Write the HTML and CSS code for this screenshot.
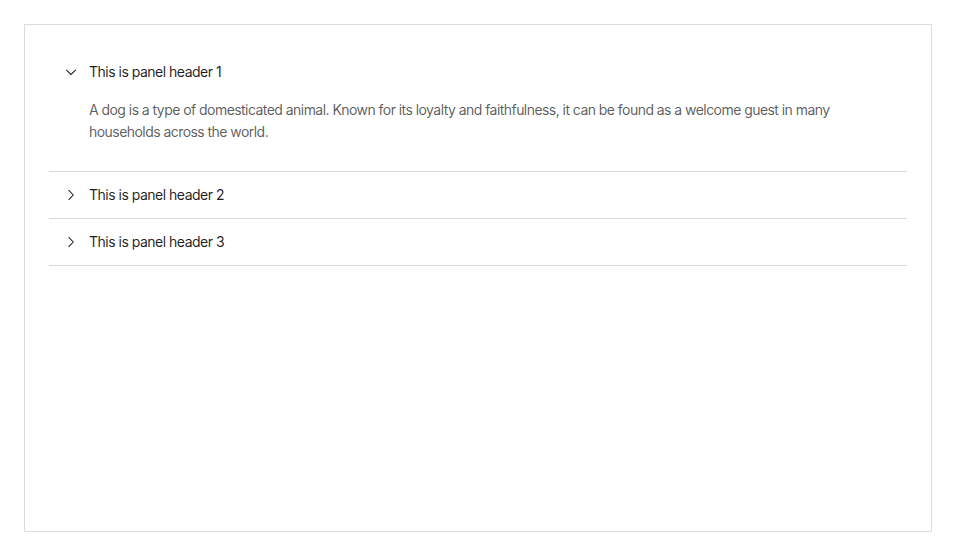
FILE: index.html
```html
<!DOCTYPE html>
<html>
<head>
<meta charset="utf-8">
<link rel="stylesheet" href="styles.css">
</head>
<body>
<div class="frame">
  <div class="collapse">
    <div class="item">
      <div class="header">
        <svg class="arrow" viewBox="0 0 12 12" width="12" height="12"><path d="M1.2 3.8 L6 8.4 L10.8 3.8" fill="none" stroke="#222" stroke-width="1.05"/></svg>
        <span>This is panel header 1</span>
      </div>
      <div class="content">A dog is a type of domesticated animal. Known for its loyalty and faithfulness, it can be found as a welcome guest in many households across the world.</div>
    </div>
    <div class="item">
      <div class="header">
        <svg class="arrow" viewBox="0 0 12 12" width="12" height="12"><path d="M3.6 1.2 L8.2 6 L3.6 10.8" fill="none" stroke="#222" stroke-width="1.05"/></svg>
        <span>This is panel header 2</span>
      </div>
    </div>
    <div class="item">
      <div class="header">
        <svg class="arrow" viewBox="0 0 12 12" width="12" height="12"><path d="M3.6 1.2 L8.2 6 L3.6 10.8" fill="none" stroke="#222" stroke-width="1.05"/></svg>
        <span>This is panel header 3</span>
      </div>
    </div>
  </div>
</div>
</body>
</html>
```

FILE: styles.css
```css
html, body {
  margin: 0;
  padding: 0;
  background: #fff;
}
body {
  font-family: Inter, "Noto Sans", sans-serif;
  font-size: 14px;
  line-height: 22px;
  letter-spacing: -0.5px;
}
.frame {
  margin: 24px;
  height: 506px;
  border: 1px solid #dcdcdc;
  box-sizing: content-box;
}
.collapse {
  padding: 24px;
}
.item {
  border-bottom: 1px solid #d9d9d9;
}
.header {
  display: flex;
  align-items: center;
  padding: 12px 16px;
  color: rgba(0, 0, 0, 0.88);
}
.arrow {
  margin-right: 12px;
  flex: none;
}
.content {
  padding: 4px 16px 28px 40px;
  color: rgba(0, 0, 0, 0.65);
  letter-spacing: -0.55px;
}
```
